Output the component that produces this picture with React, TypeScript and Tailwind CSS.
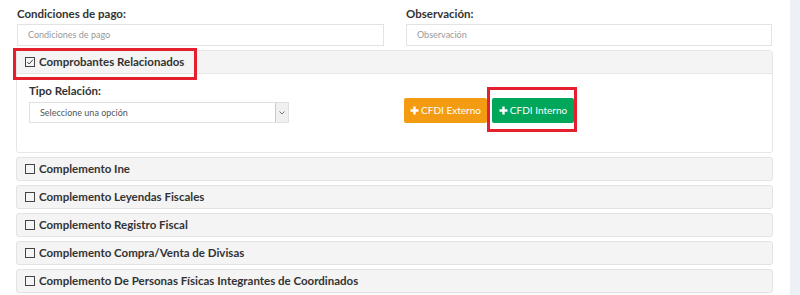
import React from "react";

function Box({ checked }: { checked?: boolean }) {
  return (
    <svg width="10" height="10" viewBox="0 0 10 10" className="shrink-0">
      <rect x="0.5" y="0.5" width="9" height="9" fill="none" stroke="#444" strokeWidth="1" />
      {checked && <path d="M2.3 5.1 L4.2 7 L7.8 2.8" fill="none" stroke="#444" strokeWidth="1" />}
    </svg>
  );
}

function Plus() {
  return (
    <svg width="9" height="9" viewBox="0 0 9 9" className="shrink-0">
      <path d="M4.5 0.5 V8.5 M0.5 4.5 H8.5" stroke="#fff" strokeWidth="2.4" />
    </svg>
  );
}

const complementos = [
  "Complemento Ine",
  "Complemento Leyendas Fiscales",
  "Complemento Registro Fiscal",
  "Complemento Compra/Venta de Divisas",
  "Complemento De Personas Físicas Integrantes de Coordinados",
];

export default function App() {
  return (
    <div
      className="w-[800px] h-[295px] flex bg-white overflow-hidden text-[#333]"
      style={{ fontFamily: "Lato, 'Noto Sans', sans-serif" }}
    >
      <div className="flex-1 pl-[16px] pr-[17px]">
        <div className="grid grid-cols-[367px_366px] gap-[22px] pl-[1px] pt-[7px]">
          <div>
            <label className="block text-[11.5px] font-bold leading-[14px] mb-[3px]">Condiciones de pago:</label>
            <div className="h-[22px] border border-[#e3e3e3] flex items-center pl-[10px] text-[9px] text-[#999]">
              Condiciones de pago
            </div>
          </div>
          <div>
            <label className="block text-[11.5px] font-bold leading-[14px] mb-[3px]">Observación:</label>
            <div className="h-[22px] border border-[#e3e3e3] flex items-center pl-[10px] text-[9px] text-[#999]">
              Observación
            </div>
          </div>
        </div>

        <div className="mt-[4px] border border-[#e6e6e6] rounded-[3px]">
          <div className="relative h-[23px] bg-[#f4f4f4] border-b border-[#e6e6e6] flex items-center gap-[4px] pl-[8px]">
            <Box checked />
            <span className="text-[11.5px] font-bold">Comprobantes Relacionados</span>
            <div className="absolute left-[-4px] top-[-3px] w-[184px] h-[32px] border-[3px] border-[#e4202e]" />
          </div>
          <div className="h-[78px] flex pl-[12px] pt-[10px]">
            <div className="w-[260px]">
              <label className="block text-[11.5px] font-bold leading-[14px] mb-[4px]">Tipo Relación:</label>
              <div className="h-[21px] border border-[#e0e0e0] flex items-center">
                <span className="flex-1 pl-[10px] text-[9px] text-[#555]">Seleccione una opción</span>
                <div className="w-[13px] h-full border-l border-[#c8c8c8] bg-[#f0f0f0] flex items-center justify-center">
                  <svg width="6" height="4" viewBox="0 0 6 4">
                    <path d="M0.5 0.5 L3 3 L5.5 0.5" fill="none" stroke="#777" strokeWidth="1" />
                  </svg>
                </div>
              </div>
            </div>
            <div className="ml-[115px] mt-[14px] flex gap-[5px] items-start">
              <div className="h-[25px] w-[83px] bg-[#f39c12] rounded-[2px] flex items-center justify-center gap-[2px] text-white text-[10px]">
                <Plus />
                CFDI Externo
              </div>
              <div className="relative h-[25px] w-[82px] bg-[#00a65a] rounded-[2px] flex items-center justify-center gap-[2px] text-white text-[10px]">
                <Plus />
                CFDI Interno
                <div className="absolute left-[-5px] top-[-11px] w-[90px] h-[45px] border-[3px] border-[#e4202e]" />
              </div>
            </div>
          </div>
        </div>

        <div className="mt-[4px] flex flex-col gap-[4px]">
          {complementos.map((c) => (
            <div
              key={c}
              className="h-[24px] bg-[#f4f4f4] border border-[#e3e3e3] rounded-[3px] flex items-center gap-[4px] pl-[8px]"
            >
              <Box />
              <span className="text-[11.5px] font-bold">{c}</span>
            </div>
          ))}
        </div>
      </div>
      <div className="w-[10px] bg-[#edf0f5]" />
    </div>
  );
}
